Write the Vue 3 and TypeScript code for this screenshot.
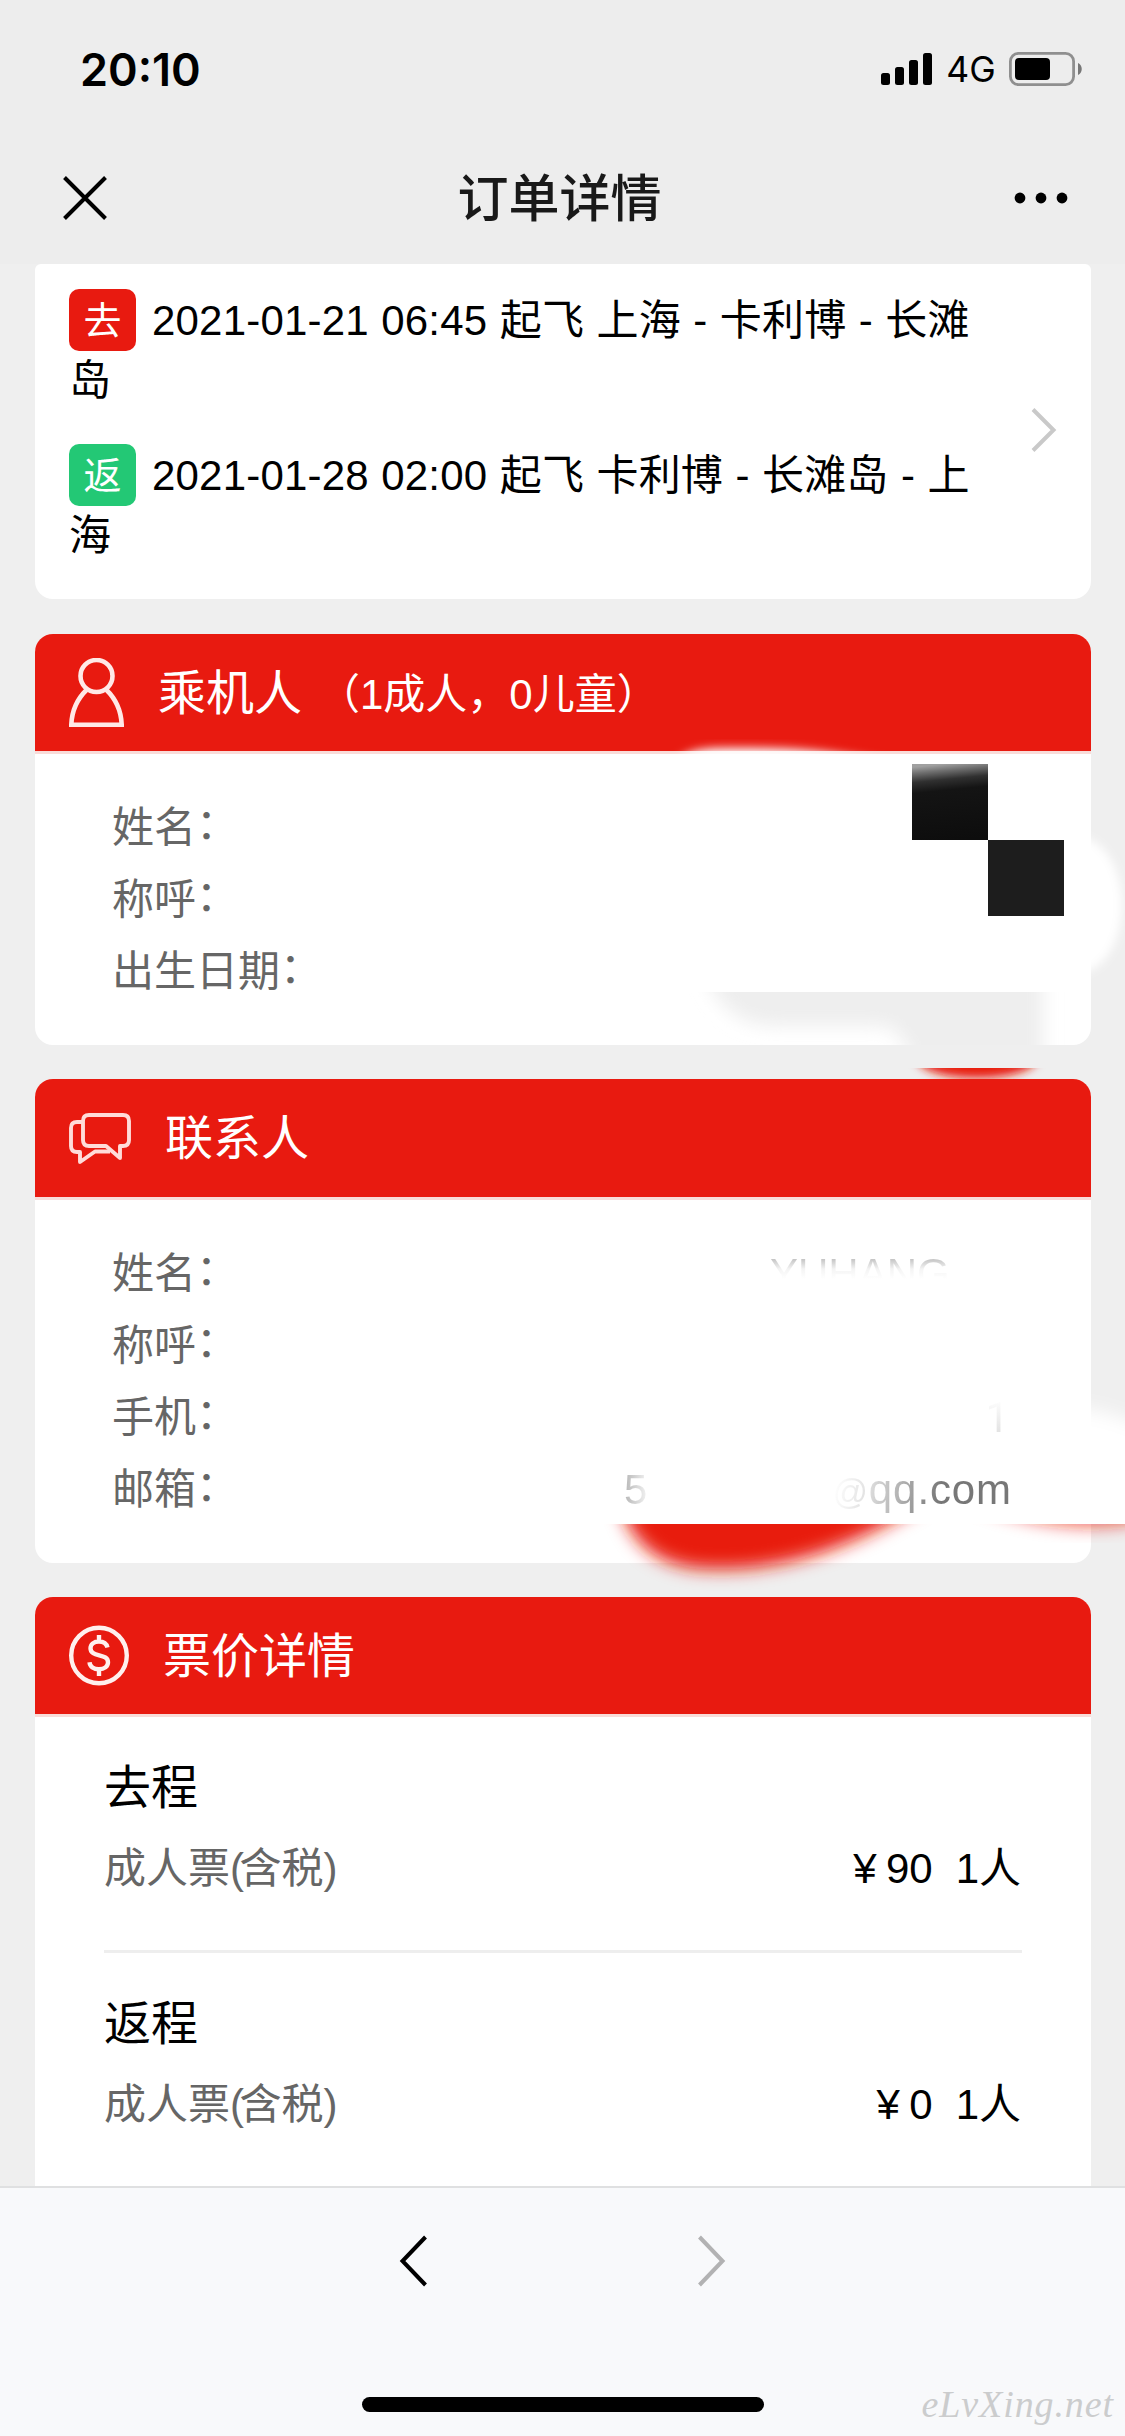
<script setup lang="ts">
interface Flight {
  kind: string
  tone: 'go' | 'back'
  text: string
}

interface Fare {
  leg: string
  type: string
  note: string
  price: string
  count: string
}

const flights: Flight[] = [
  { kind: '去', tone: 'go', text: '2021-01-21 06:45 起飞 上海 - 卡利博 - 长滩岛' },
  { kind: '返', tone: 'back', text: '2021-01-28 02:00 起飞 卡利博 - 长滩岛 - 上海' },
]

const passengerFields: string[] = ['姓名', '称呼', '出生日期']

const fares: Fare[] = [
  { leg: '去程', type: '成人票', note: '含税', price: '90', count: '1人' },
  { leg: '返程', type: '成人票', note: '含税', price: '0', count: '1人' },
]
</script>

<template>
  <div class="phone">
    <header class="top">
      <div class="status">
        <span class="time">20:10</span>
        <div class="indicators">
          <svg class="signal" width="52" height="34" viewBox="0 0 52 34">
            <rect x="0" y="21" width="9" height="12" rx="2.5" />
            <rect x="14" y="15" width="9" height="18" rx="2.5" />
            <rect x="28" y="8" width="9" height="25" rx="2.5" />
            <rect x="42" y="1" width="9" height="32" rx="2.5" />
          </svg>
          <span class="network">4G</span>
          <svg class="battery" width="74" height="34" viewBox="0 0 74 34">
            <rect x="1.4" y="1.4" width="63.2" height="31.2" rx="8" fill="none" stroke="#8f8f8f" stroke-width="2.8" />
            <rect x="6" y="6" width="35" height="22" rx="4" />
            <path d="M69 11c5 2 5 10 0 12z" fill="#777" />
          </svg>
        </div>
      </div>
      <nav class="nav">
        <svg width="46" height="46" viewBox="0 0 46 46" fill="none" stroke="#000" stroke-width="4">
          <path d="M2.5 2.5l41 41M43.5 2.5l-41 41" />
        </svg>
        <h1>订单详情</h1>
        <svg width="54" height="12" viewBox="0 0 54 12">
          <circle cx="6" cy="6" r="5.4" />
          <circle cx="27" cy="6" r="5.4" />
          <circle cx="48" cy="6" r="5.4" />
        </svg>
      </nav>
    </header>

    <main class="content">
      <section class="card flights">
        <div class="flight-list">
          <p v-for="f in flights" :key="f.kind" class="flight">
            <span class="badge" :class="f.tone">{{ f.kind }}</span><span>{{ f.text }}</span>
          </p>
        </div>
        <svg class="chevron" width="28" height="46" viewBox="0 0 28 46" fill="none" stroke="#c9c9c9" stroke-width="4">
          <path d="M3 2.5l20.500 20.500L3 43.500" />
        </svg>
      </section>

      <section class="card passenger">
        <div class="card-head">
          <svg width="55" height="69" viewBox="0 0 55 69" fill="none" stroke="#ffe9e7" stroke-width="4.600">
            <circle cx="27.500" cy="18" r="16" />
            <path d="M18 31.500C8 41 2.800 54 2.300 66.700h50.400c-.5-12.700-5.700-25.700-15.700-35.200" />
          </svg>
          <h2>乘机人<small>（1成人，0儿童）</small></h2>
        </div>
        <div class="fields">
          <div v-for="label in passengerFields" :key="label" class="field">
            <span>{{ label }}<i class="colon">：</i></span>
          </div>
        </div>
      </section>

      <section class="card contact">
        <div class="card-head">
          <svg width="62" height="51" viewBox="0 0 62 51" fill="none" stroke="#ffdcd9" stroke-width="3.900" stroke-linejoin="round">
            <path d="M20 2h34q6 0 6 6v19q0 6-6 6h-3v12L37 33H20q-6 0-6-6V8q0-6 6-6z" />
            <path d="M13 9H8q-6 0-6 6v18q0 6 6 6h3v10L26 38.500h15" />
          </svg>
          <h2>联系人</h2>
        </div>
        <div class="fields">
          <div class="field"><span>姓名<i class="colon">：</i></span><span class="value name">YUHANG</span></div>
          <div class="field"><span>称呼<i class="colon">：</i></span></div>
          <div class="field"><span>手机<i class="colon">：</i></span><span class="value phone-no">1</span></div>
          <div class="field">
            <span>邮箱<i class="colon">：</i></span>
            <span class="value email"><i class="lead">5</i><i class="domain"><i class="at">@</i>qq.com</i></span>
          </div>
        </div>
      </section>

      <section class="card price">
        <div class="card-head">
          <svg width="60" height="61" viewBox="0 0 60 61" fill="none" stroke="#fff0ee" stroke-width="4.400">
            <circle cx="30" cy="30.500" r="27.800" />
            <path d="M38.500 22.500c-1-4-4-6-8.500-6-5 0-8.500 2.700-8.500 6.800 0 9.500 17.500 4.500 17.500 14 0 4.200-3.700 7-9 7s-9-2.500-9.500-7M30 10v7M30 44v7" />
          </svg>
          <h2>票价详情</h2>
        </div>
        <div v-for="fare in fares" :key="fare.leg" class="fare">
          <h3>{{ fare.leg }}</h3>
          <div class="fare-row">
            <span class="type">{{ fare.type }}<i class="paren">(</i>{{ fare.note }}<i class="paren">)</i></span>
            <span class="amount"><span><i class="yen">¥</i>{{ fare.price }}</span><span>{{ fare.count }}</span></span>
          </div>
        </div>
      </section>
    </main>

    <footer class="toolbar">
      <div class="arrows">
        <svg width="30" height="52" viewBox="0 0 30 52" fill="none" stroke="#000" stroke-width="4">
          <path d="M26.500 2L3.500 26l23 24" />
        </svg>
        <svg width="30" height="52" viewBox="0 0 30 52" fill="none" stroke="#b2b2b3" stroke-width="4">
          <path d="M3.500 2l23 24-23 24" />
        </svg>
      </div>
      <div class="home"></div>
      <span class="watermark">eLvXing.net</span>
    </footer>

    <!-- brush marks and blocks that hide personal data -->
    <svg class="marks" width="1125" height="2436" viewBox="0 0 1125 2436">
      <defs>
        <filter id="soft4" x="-30%" y="-60%" width="160%" height="220%"><feGaussianBlur stdDeviation="5" /></filter>
        <filter id="soft8" x="-30%" y="-60%" width="160%" height="220%"><feGaussianBlur stdDeviation="9" /></filter>
        <clipPath id="clipHead"><rect x="600" y="720" width="491" height="35" /></clipPath>
        <clipPath id="clipSide"><rect x="1091" y="780" width="34" height="744" /></clipPath>
        <clipPath id="clipGray"><rect x="680" y="992" width="400" height="53" /></clipPath>
        <clipPath id="clipGap"><rect x="880" y="1068" width="200" height="11" /></clipPath>
        <clipPath id="clipRed"><rect x="580" y="1524" width="545" height="73" /></clipPath>
        <linearGradient id="sheen" x1="0.450" y1="0" x2="0.550" y2="1">
          <stop offset="0" stop-color="#a0a0a0" />
          <stop offset="0.080" stop-color="#707070" />
          <stop offset="0.200" stop-color="#303030" />
          <stop offset="0.340" stop-color="#141414" />
          <stop offset="1" stop-color="#0d0d0d" />
        </linearGradient>
      </defs>
      <g clip-path="url(#clipHead)">
        <path d="M676 762C690 747 712 748 745 748c55 0 90 4 145 14z" fill="#fff" filter="url(#soft4)" />
      </g>
      <g clip-path="url(#clipSide)" fill="#fff">
        <ellipse cx="1078" cy="905" rx="44" ry="68" filter="url(#soft4)" />
        <path d="M1060 1408q40 -3 90 22v147h-90z" filter="url(#soft8)" />
      </g>
      <rect x="912" y="764" width="76" height="76" fill="url(#sheen)" />
      <rect x="988" y="840" width="76" height="76" fill="#1d1d1d" />
      <g clip-path="url(#clipGray)">
        <path d="M700 960C712 1000 735 1026 775 1026h100c24 0 30 11 44 60h124V960z" fill="#eee" filter="url(#soft8)" />
      </g>
      <g clip-path="url(#clipGap)">
        <ellipse cx="977" cy="1058" rx="60" ry="20" fill="#e81a10" filter="url(#soft4)" />
      </g>
      <g clip-path="url(#clipRed)">
        <path d="M614 1480c10 56 36 87 92 89 76 3 150-18 252-89z" fill="#e81a10" filter="url(#soft8)" />
        <path d="M970 1500c55 22 115 32 170 20v-24z" fill="#e81a10" fill-opacity="0.750" filter="url(#soft8)" />
      </g>
    </svg>
  </div>
</template>

<style>
body {
  background: #efefef;
}
</style>

<style scoped>
.phone {
  position: relative;
  display: flex;
  flex-direction: column;
  width: 1125px;
  height: 2436px;
  overflow: hidden;
  background: #efefef;
  color: #000;
  font-family: 'Liberation Sans', 'Noto Sans CJK SC', sans-serif;
  font-size: 42px;
}

h1, h2, h3, p {
  margin: 0;
  font-weight: 400;
}

i {
  font-style: normal;
}

svg {
  display: block;
  flex: none;
}

.top {
  flex: none;
  height: 264px;
  background: #ededed;
}

.status {
  display: flex;
  align-items: center;
  justify-content: space-between;
  height: 138px;
  padding: 0 42px 0 80px;
  box-sizing: border-box;
}

.time {
  font: 600 45px/1 Inter, sans-serif;
}

.indicators {
  display: flex;
  align-items: center;
}

.network {
  width: 76px;
  padding-top: 2px;
  text-align: center;
  font: 400 35.500px/34px Inter, sans-serif;
}

.nav {
  display: flex;
  align-items: center;
  justify-content: space-between;
  height: 120px;
  padding: 0 57px 0 62px;
}

.nav h1 {
  padding-bottom: 6px;
  margin-right: 3px;
  color: #191919;
  font-size: 51px;
  font-weight: 500;
}

.content {
  flex: none;
  display: flex;
  flex-direction: column;
  gap: 34px;
  height: 1922px;
  padding: 0 34px 0 35px;
  overflow: hidden;
}

.card {
  flex: none;
  overflow: hidden;
  border-radius: 18px;
  background: #fff;
}

.flights {
  display: flex;
  align-items: center;
  justify-content: space-between;
  height: 335px;
  margin-bottom: 1px;
  padding: 0 33px 0 34px;
  box-sizing: border-box;
  border-radius: 6px 6px 18px 18px;
}

.flight-list {
  width: 914px;
  height: 281px;
}

.flight {
  height: 155px;
  line-height: 60px;
  letter-spacing: 0.2px;
  word-spacing: 0.5px;
}

.chevron {
  margin-bottom: 3px;
}

.badge {
  display: inline-block;
  width: 67px;
  height: 62px;
  margin: -4px 16px -4px 0;
  border-radius: 10px;
  color: #fff;
  font-size: 38px;
  line-height: 64px;
  text-align: center;
  vertical-align: 1px;
}

.go {
  background: #e81a10;
}

.back {
  background: #23c875;
}

.card-head {
  display: flex;
  align-items: center;
  height: 117px;
  padding-left: 34px;
  border-bottom: 3px solid #f9dcd9;
  background: #e81a10;
  background-clip: padding-box;
  color: #fff;
}

.card-head h2 {
  margin-left: 34px;
  padding-bottom: 8px;
  font-size: 48px;
}

.card-head small {
  margin-left: 16px;
  font-size: 42px;
  vertical-align: 1px;
}

.passenger {
  height: 411px;
}

.contact {
  height: 484px;
}

.contact .card-head {
  height: 118px;
}

.price {
  height: 640px;
  border-radius: 18px 18px 0 0;
}

.fields {
  padding: 37px 78px 0 77px;
}

.field {
  display: flex;
  justify-content: space-between;
  height: 72px;
  color: #666;
  line-height: 74px;
}

.colon {
  position: relative;
  top: -3px;
}

.value {
  color: transparent;
}

.name {
  width: 243px;
  background: linear-gradient(#c4c4c4 22px, #f4f4f4 32px, #fff 42px);
  background-clip: text;
}

.phone-no {
  margin-right: 4px;
  font-family: Roboto, sans-serif;
  background: linear-gradient(#fff 18px, #e2e2e2 52px);
  background-clip: text;
}

.email {
  display: flex;
  justify-content: space-between;
  width: 388px;
  margin-right: 1px;
}

.lead {
  background: linear-gradient(90deg, #b5b5b5, #f2f2f2);
  background-clip: text;
}

.domain {
  letter-spacing: 0.9px;
  background: linear-gradient(100deg, #fff 4%, #e4e4e4 20%, #b4b4b4 38%, #777 60%, #777);
  background-clip: text;
}

.at {
  font-size: 35px;
}

.fare {
  height: 236px;
  margin: 0 69px;
  padding-top: 33px;
  box-sizing: border-box;
}

.fare:not(.fare + .fare) {
  height: 233px;
}

.fare + .fare {
  border-top: 3px solid #eee;
}

.fare h3 {
  font-size: 47px;
  line-height: 75px;
}

.fare-row {
  display: flex;
  justify-content: space-between;
  margin-top: 7px;
  line-height: 74px;
}

.type {
  color: #666;
}

.paren {
  letter-spacing: -4.5px;
}

.yen {
  display: inline-block;
  width: 42px;
  text-align: center;
}

.amount {
  display: flex;
  gap: 23px;
  margin-right: 1px;
}

.toolbar {
  position: relative;
  flex: 1;
  display: flex;
  flex-direction: column;
  align-items: center;
  border-top: 2px solid #dfe0e1;
  background: #f8f9fb;
}

.arrows {
  display: flex;
  gap: 267px;
  margin-top: 47px;
}

.home {
  width: 402px;
  height: 15px;
  margin-top: 110px;
  border-radius: 8px;
  background: #000;
}

.watermark {
  position: absolute;
  right: 11px;
  bottom: 10px;
  color: #cbcccd;
  font: italic 38px/44px 'Liberation Serif', serif;
  letter-spacing: 0.9px;
}

.marks {
  position: absolute;
  top: 0;
  left: 0;
  pointer-events: none;
}
</style>
